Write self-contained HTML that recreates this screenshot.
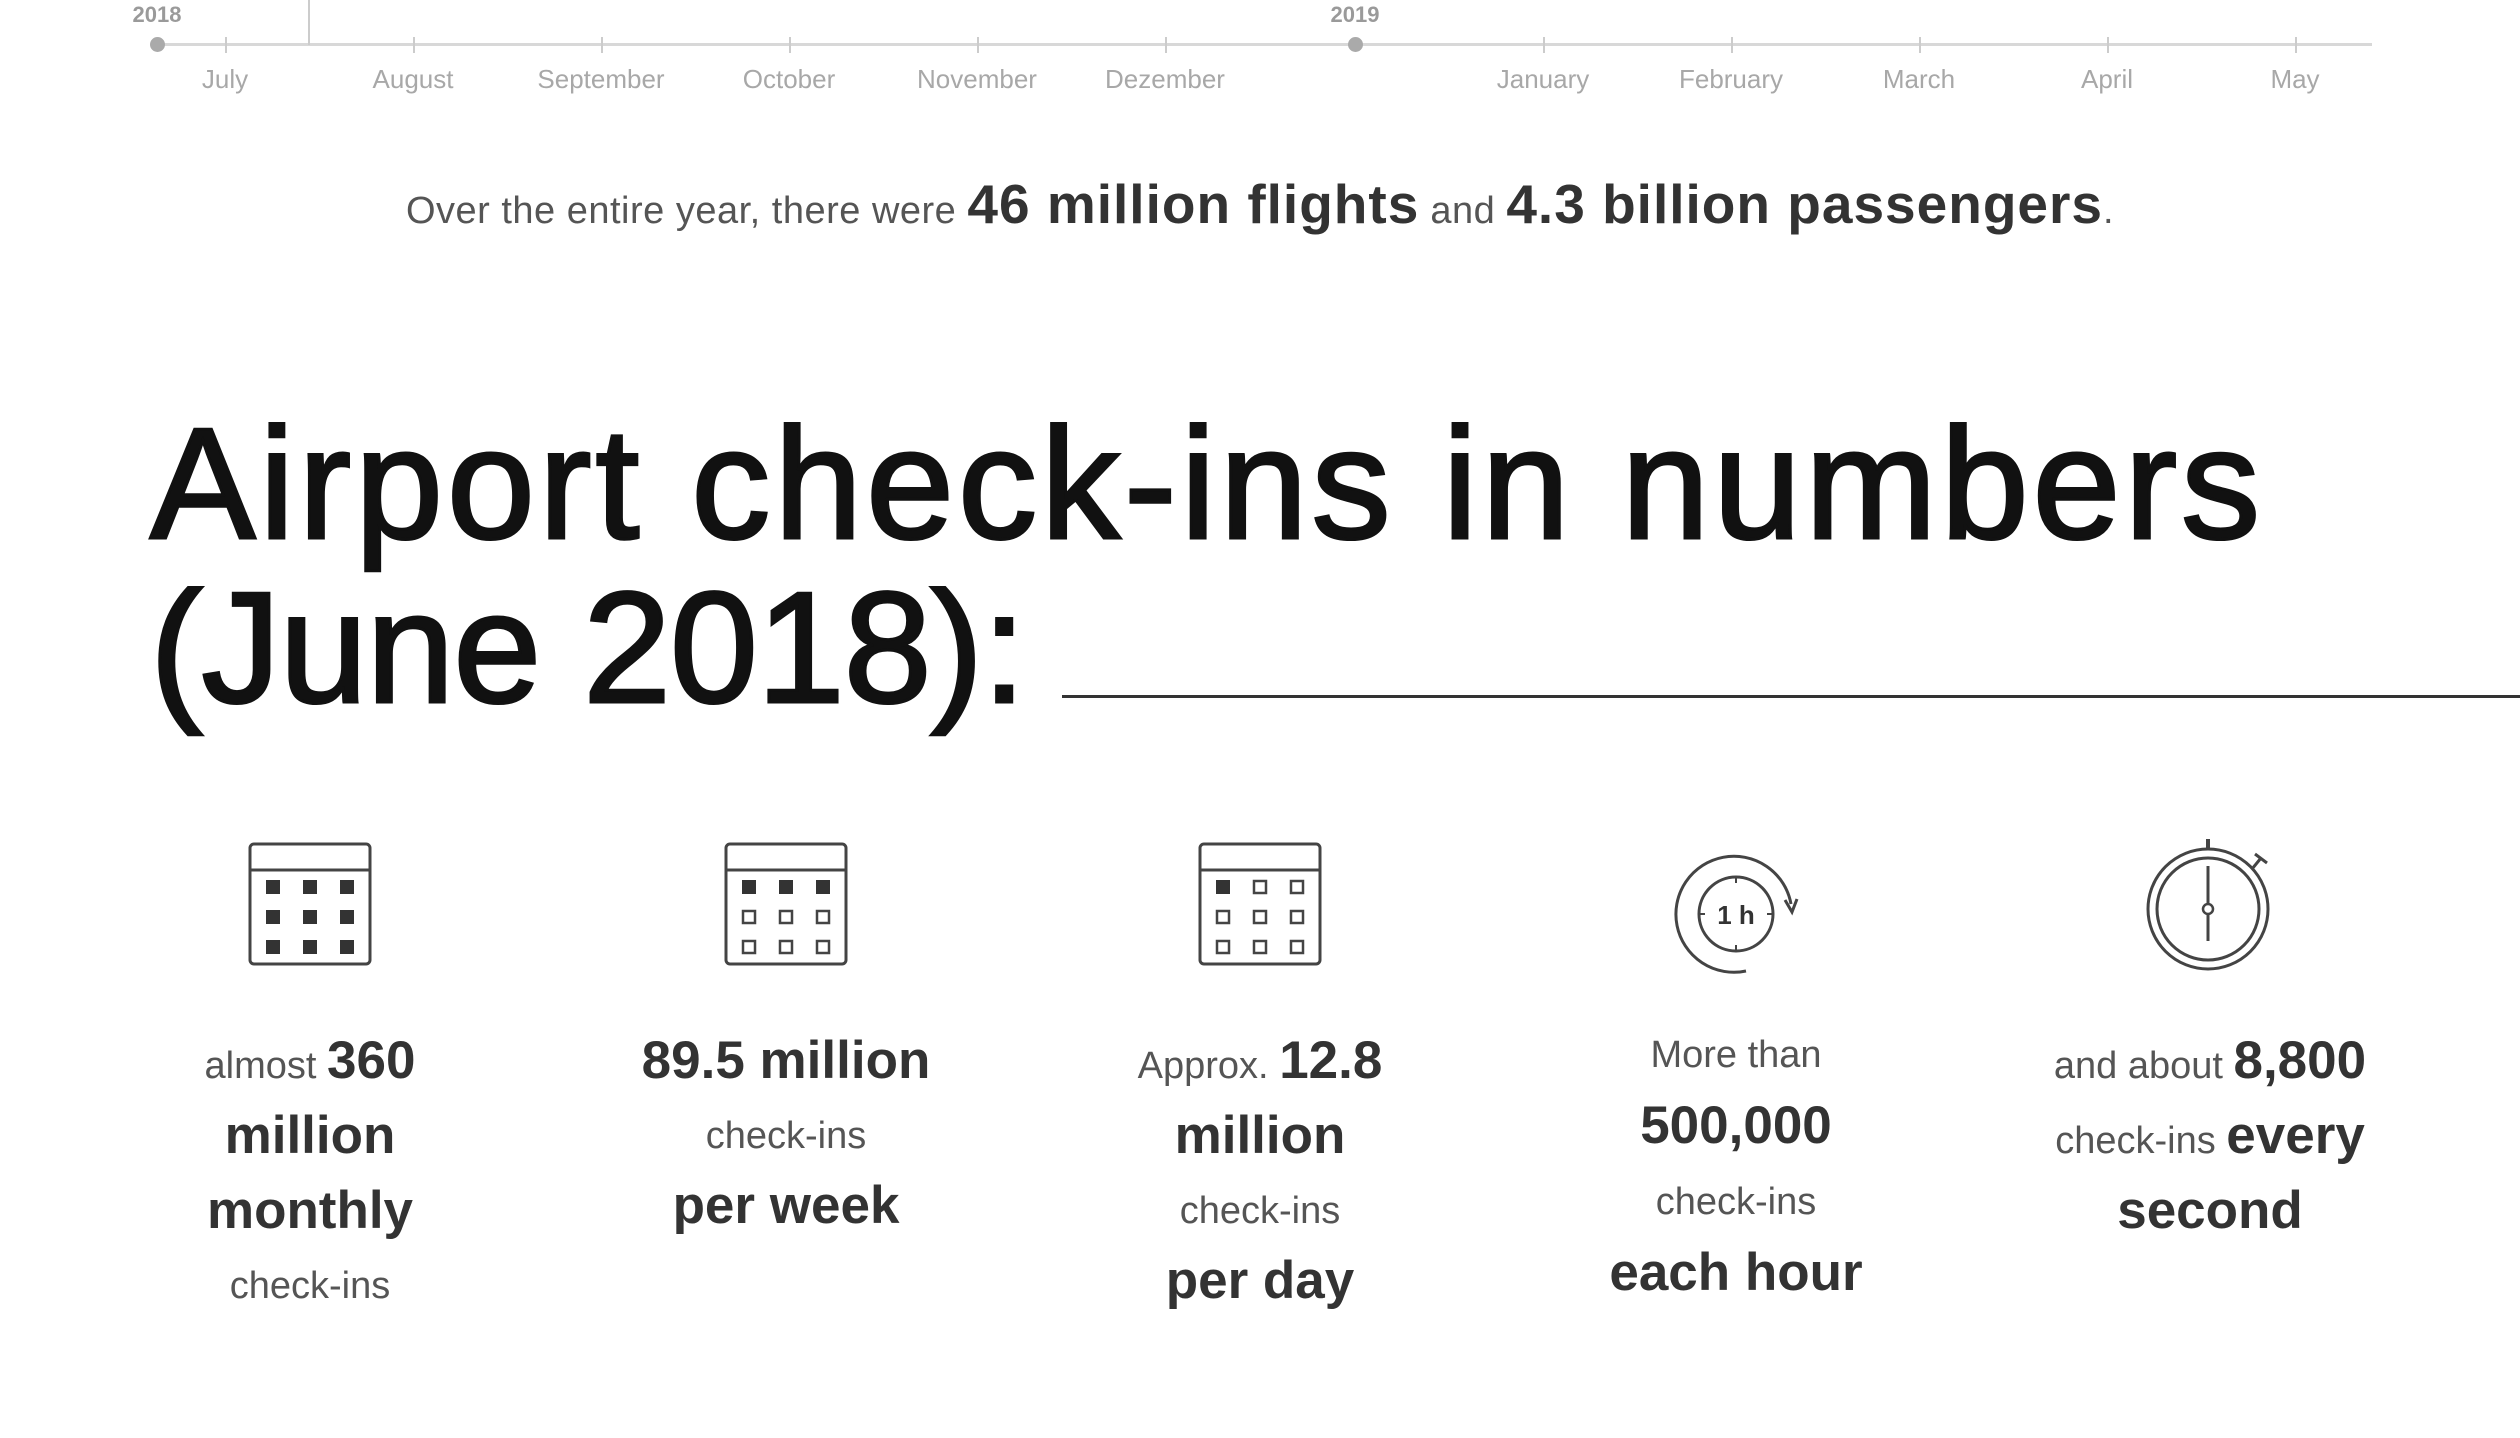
<!DOCTYPE html>
<html><head><meta charset="utf-8"><style>
html,body{margin:0;padding:0;background:#fff;width:2520px;height:1438px;overflow:hidden;font-family:"Liberation Sans",sans-serif;}
.a{position:absolute;}
.m{position:absolute;top:64px;font-size:26px;color:#a8a8a8;transform:translateX(-50%);white-space:nowrap}
.y{position:absolute;top:2px;font-size:22px;font-weight:bold;color:#9a9a9a;transform:translateX(-50%)}
.tk{position:absolute;top:37px;width:2px;height:16px;background:#ccc}
.sent{position:absolute;top:172px;left:0;width:2520px;text-align:center;color:#555;font-size:38px;white-space:nowrap;letter-spacing:0.5px}
.sent b{font-size:55px;color:#333;letter-spacing:1px}
h1{position:absolute;left:150px;top:402px;margin:0;font-size:158px;line-height:164px;font-weight:normal;color:#111;-webkit-text-stroke:3px #111;letter-spacing:4px;white-space:nowrap}
.col{position:absolute;top:1026px;width:480px;text-align:center;transform:translateX(-50%);color:#555;font-size:38px;line-height:70px}
.col b{font-size:53px;color:#333;line-height:70px}
.ic{position:absolute;top:842px;transform:translateX(-50%)}
</style></head><body>
<div class="a" style="left:157px;top:43px;width:2215px;height:3px;background:#d8d8d8"></div>
<div class="a" style="left:308px;top:0;width:2px;height:45px;background:#ccc"></div>
<div class="a" style="left:150px;top:37px;width:15px;height:15px;border-radius:50%;background:#aaa"></div>
<div class="a" style="left:1348px;top:37px;width:15px;height:15px;border-radius:50%;background:#aaa"></div>
<div class="y" style="left:157px">2018</div><div class="y" style="left:1355px">2019</div>
<div class="tk" style="left:225px"></div><div class="tk" style="left:413px"></div><div class="tk" style="left:601px"></div><div class="tk" style="left:789px"></div><div class="tk" style="left:977px"></div><div class="tk" style="left:1165px"></div><div class="tk" style="left:1543px"></div><div class="tk" style="left:1731px"></div><div class="tk" style="left:1919px"></div><div class="tk" style="left:2107px"></div><div class="tk" style="left:2295px"></div>
<div class="m" style="left:225px">July</div><div class="m" style="left:413px">August</div><div class="m" style="left:601px">September</div><div class="m" style="left:789px">October</div><div class="m" style="left:977px">November</div><div class="m" style="left:1165px">Dezember</div><div class="m" style="left:1543px">January</div><div class="m" style="left:1731px">February</div><div class="m" style="left:1919px">March</div><div class="m" style="left:2107px">April</div><div class="m" style="left:2295px">May</div>
<div class="sent">Over the entire year, there were <b>46 million flights</b> and <b>4.3 billion passengers</b>.</div>
<h1>Airport check-ins in numbers<br><span style="letter-spacing:-1px">(June 2018):</span></h1>
<div class="a" style="left:1062px;top:695px;width:1458px;height:3px;background:#333"></div>

<svg class="ic" style="left:310px" width="124" height="124" viewBox="0 0 124 124"><rect x="2" y="2" width="120" height="120" rx="4" fill="none" stroke="#444" stroke-width="3"/><line x1="2" y1="28" x2="122" y2="28" stroke="#444" stroke-width="3"/><g fill="#333"><rect x="18" y="38" width="14" height="14"/><rect x="55" y="38" width="14" height="14"/><rect x="92" y="38" width="14" height="14"/><rect x="18" y="68" width="14" height="14"/><rect x="55" y="68" width="14" height="14"/><rect x="92" y="68" width="14" height="14"/><rect x="18" y="98" width="14" height="14"/><rect x="55" y="98" width="14" height="14"/><rect x="92" y="98" width="14" height="14"/></g></svg>
<svg class="ic" style="left:786px" width="124" height="124" viewBox="0 0 124 124"><rect x="2" y="2" width="120" height="120" rx="4" fill="none" stroke="#444" stroke-width="3"/><line x1="2" y1="28" x2="122" y2="28" stroke="#444" stroke-width="3"/><g fill="#333"><rect x="18" y="38" width="14" height="14"/><rect x="55" y="38" width="14" height="14"/><rect x="92" y="38" width="14" height="14"/></g><g fill="none" stroke="#444" stroke-width="2.5"><rect x="19" y="69" width="12" height="12"/><rect x="56" y="69" width="12" height="12"/><rect x="93" y="69" width="12" height="12"/><rect x="19" y="99" width="12" height="12"/><rect x="56" y="99" width="12" height="12"/><rect x="93" y="99" width="12" height="12"/></g></svg>
<svg class="ic" style="left:1260px" width="124" height="124" viewBox="0 0 124 124"><rect x="2" y="2" width="120" height="120" rx="4" fill="none" stroke="#444" stroke-width="3"/><line x1="2" y1="28" x2="122" y2="28" stroke="#444" stroke-width="3"/><rect x="18" y="38" width="14" height="14" fill="#333"/><g fill="none" stroke="#444" stroke-width="2.5"><rect x="56" y="39" width="12" height="12"/><rect x="93" y="39" width="12" height="12"/><rect x="19" y="69" width="12" height="12"/><rect x="56" y="69" width="12" height="12"/><rect x="93" y="69" width="12" height="12"/><rect x="19" y="99" width="12" height="12"/><rect x="56" y="99" width="12" height="12"/><rect x="93" y="99" width="12" height="12"/></g></svg>
<svg class="ic" style="left:1738px;top:850px" width="130" height="130" viewBox="0 0 130 130"><path d="M73 121 A58 58 0 1 1 118 54" fill="none" stroke="#444" stroke-width="3"/><path d="M112 50 L119 62 L124 49" fill="none" stroke="#444" stroke-width="3"/><circle cx="63" cy="64" r="37" fill="none" stroke="#444" stroke-width="3"/><g stroke="#444" stroke-width="2"><line x1="63" y1="27" x2="63" y2="33"/><line x1="63" y1="95" x2="63" y2="101"/><line x1="26" y1="64" x2="32" y2="64"/><line x1="94" y1="64" x2="100" y2="64"/></g><text x="63" y="74" text-anchor="middle" font-family="Liberation Sans" font-size="26" font-weight="bold" fill="#333">1 h</text></svg>
<svg class="ic" style="left:2211px;top:836px" width="130" height="140" viewBox="0 0 130 140"><circle cx="62" cy="73" r="60" fill="none" stroke="#444" stroke-width="3"/><circle cx="62" cy="73" r="51" fill="none" stroke="#444" stroke-width="3"/><rect x="60" y="3" width="4" height="10" fill="#444"/><line x1="106" y1="33" x2="115" y2="22" stroke="#444" stroke-width="3"/><line x1="109" y1="18" x2="121" y2="27" stroke="#444" stroke-width="3"/><line x1="62" y1="30" x2="62" y2="105" stroke="#444" stroke-width="3"/><circle cx="62" cy="73" r="5" fill="#fff" stroke="#444" stroke-width="2.5"/></svg>

<div class="col" style="left:310px">almost <b>360<br>million<br>monthly</b><br>check-ins</div>
<div class="col" style="left:786px"><b>89.5 million</b><br>check-ins<br><b>per week</b></div>
<div class="col" style="left:1260px">Approx. <b>12.8<br>million</b><br>check-ins<br><b>per day</b></div>
<div class="col" style="left:1736px;top:1020px;line-height:71px">More than<br><b>500,000</b><br>check-ins<br><b>each hour</b></div>
<div class="col" style="left:2210px">and about <b>8,800</b><br>check-ins <b>every<br>second</b></div>
</body></html>
